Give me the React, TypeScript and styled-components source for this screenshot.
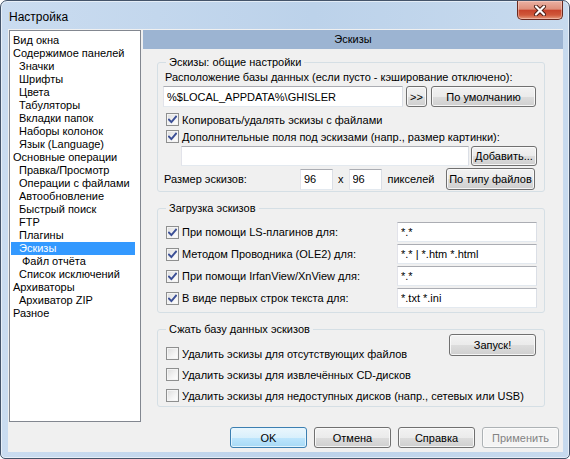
import styled, { createGlobalStyle } from 'styled-components';

const GlobalStyle = createGlobalStyle`
  html, body {
    margin: 0;
    padding: 0;
    background: #ffffff;
  }
  body {
    font-family: 'Liberation Sans', Arial, sans-serif;
    font-size: 11px;
    color: #000;
  }
  * {
    box-sizing: border-box;
  }
`;

const Window = styled.div`
  width: 570px;
  height: 459px;
  display: flex;
  flex-direction: column;
  padding: 0 6px 6px 7px;
  border: 1px solid #44546a;
  border-radius: 7px 7px 5px 5px;
  background: linear-gradient(90deg, #cadcf0 0%, #bcd2ea 55%, #c7daee 100%);
  box-shadow: inset 0 0 0 1px rgba(255, 255, 255, 0.55);
`;

const TitleBar = styled.div`
  height: 28px;
  flex: none;
  display: flex;
  justify-content: space-between;
  align-items: flex-start;
`;

const TitleText = styled.div`
  margin-top: 9px;
  padding-left: 1px;
  font-size: 12px;
  line-height: 14px;
  color: #000;
`;

const CloseButton = styled.div`
  width: 46px;
  height: 19px;
  display: flex;
  align-items: center;
  justify-content: center;
  border: 1px solid #6a2a1f;
  border-top: none;
  border-radius: 0 0 5px 5px;
  background: linear-gradient(180deg, #eab1a3 0%, #de8f7b 45%, #c8442b 52%, #d0583a 78%, #e59a7c 100%);
  box-shadow: inset 0 0 0 1px rgba(255, 220, 210, 0.45);
`;

const Client = styled.div`
  flex: 1;
  display: flex;
  flex-direction: column;
  background: #f0f0f0;
  min-width: 0;
`;

const MainRow = styled.div`
  display: flex;
  height: 393px;
  padding: 1px 0 0 1px;
`;

const Tree = styled.div`
  width: 132px;
  height: 392px;
  flex: none;
  border: 1px solid #828790;
  background: #fff;
  padding-top: 3px;
`;

const TreeRow = styled.div<{ $level: number; $selected?: boolean }>`
  height: 13px;
  line-height: 13px;
  margin: 0 5px 0 1px;
  padding-left: ${(p) => (p.$level === 0 ? 2 : p.$level === 1 ? 8 : 11)}px;
  white-space: nowrap;
  color: ${(p) => (p.$selected ? '#fff' : '#000')};
  background: ${(p) => (p.$selected ? '#3399ff' : 'transparent')};
`;

const RightPanel = styled.div`
  flex: 1;
  min-width: 0;
  margin-left: 2px;
  display: flex;
  flex-direction: column;
`;

const PanelHeader = styled.div`
  height: 19px;
  line-height: 19px;
  text-align: center;
  background: #9cb4d2;
  color: #000;
`;

const GroupBox = styled.div<{ $top: number; $bottom: number }>`
  margin: ${(p) => p.$top}px 18px 0 14px;
  padding: 0 7px ${(p) => p.$bottom}px 5px;
  border: 1px solid #d5dfe5;
  border-radius: 3px;
`;

const GroupTitle = styled.div`
  width: fit-content;
  margin: -7px 0 0 3px;
  padding: 0 3px;
  line-height: 13px;
  background: #f0f0f0;
`;

const Caption = styled.div`
  margin: 2px 0 0 2px;
  line-height: 13px;
`;

const Row = styled.div<{ $height: number; $top: number; $indent?: number }>`
  display: flex;
  align-items: center;
  height: ${(p) => p.$height}px;
  margin-top: ${(p) => p.$top}px;
  padding-left: ${(p) => p.$indent ?? 0}px;
`;

const TextInput = styled.input<{ $width?: number; $height?: number }>`
  ${(p) => (p.$width ? `width: ${p.$width}px; flex: none;` : 'flex: 1 1 0; width: 0; min-width: 0;')}
  height: ${(p) => p.$height ?? 21}px;
  padding: 0 3px;
  margin: 0;
  border: 1px solid;
  border-color: #abadb3 #dbdfe6 #e3e9ef #e2e3ea;
  background: #fff;
  font: inherit;
  color: #000;
  outline: none;
`;

const Button = styled.div<{ $width: number; $height?: number; $kind?: 'default' | 'disabled' }>`
  width: ${(p) => p.$width}px;
  height: ${(p) => p.$height ?? 21}px;
  flex: none;
  display: flex;
  align-items: center;
  justify-content: center;
  border: 1px solid ${(p) => (p.$kind === 'default' ? '#3c7fb1' : p.$kind === 'disabled' ? '#adb2b5' : '#707070')};
  border-radius: 3px;
  color: ${(p) => (p.$kind === 'disabled' ? '#838383' : '#000')};
  background: ${(p) =>
    p.$kind === 'default'
      ? 'linear-gradient(180deg, #eaf6fd 0%, #d9f0fc 50%, #bee6fd 50%, #a7d9f5 100%)'
      : p.$kind === 'disabled'
      ? '#f4f4f4'
      : 'linear-gradient(180deg, #f2f2f2 0%, #ebebeb 50%, #dddddd 50%, #cfcfcf 100%)'};
  box-shadow: inset 0 0 0 1px ${(p) => (p.$kind === 'default' ? 'rgba(230,246,255,0.9)' : 'rgba(252,252,252,0.85)')};
  white-space: nowrap;
`;

const CheckLabel = styled.label<{ $height: number }>`
  display: flex;
  align-items: center;
  height: ${(p) => p.$height}px;
  padding-left: 3px;
  white-space: nowrap;
`;

const CheckBox = styled.span`
  width: 13px;
  height: 13px;
  flex: none;
  margin-right: 3px;
  border: 1px solid #8e8f8f;
  background: linear-gradient(135deg, #dcdcdc 0%, #f4f4f4 60%, #ffffff 100%);
  box-shadow: inset 0 0 0 1px #f4f4f4;
  display: flex;
  align-items: center;
  justify-content: center;
`;

const Spacer = styled.div`
  flex: 1;
`;

const Plain = styled.span<{ $left: number }>`
  margin-left: ${(p) => p.$left}px;
  flex: none;
`;

const SizeLabel = styled.span`
  width: 137px;
  flex: none;
  padding-left: 1px;
`;

const LoadList = styled.div`
  margin-top: 6px;
`;

const LoadLabel = styled.div`
  width: 234px;
  flex: none;
`;

const CompactGrid = styled.div`
  display: grid;
  grid-template-columns: 1fr auto;
  grid-template-rows: 30px 21px 21px;
  margin-top: -2px;
  padding-right: 1px;
`;

const GridCell = styled.div<{ $span?: boolean; $align: 'start' | 'end' }>`
  grid-column: ${(p) => (p.$span ? '1 / 3' : 'auto')};
  align-self: ${(p) => p.$align};
`;

const ButtonBar = styled.div`
  display: flex;
  justify-content: flex-end;
  gap: 7px;
  margin-top: 5px;
  padding-right: 4px;
`;

const treeItems: { text: string; level: number; selected?: boolean }[] = [
  { text: 'Вид окна', level: 0 },
  { text: 'Содержимое панелей', level: 0 },
  { text: 'Значки', level: 1 },
  { text: 'Шрифты', level: 1 },
  { text: 'Цвета', level: 1 },
  { text: 'Табуляторы', level: 1 },
  { text: 'Вкладки папок', level: 1 },
  { text: 'Наборы колонок', level: 1 },
  { text: 'Язык (Language)', level: 1 },
  { text: 'Основные операции', level: 0 },
  { text: 'Правка/Просмотр', level: 1 },
  { text: 'Операции с файлами', level: 1 },
  { text: 'Автообновление', level: 1 },
  { text: 'Быстрый поиск', level: 1 },
  { text: 'FTP', level: 1 },
  { text: 'Плагины', level: 1 },
  { text: 'Эскизы', level: 1, selected: true },
  { text: 'Файл отчёта', level: 2 },
  { text: 'Список исключений', level: 1 },
  { text: 'Архиваторы', level: 0 },
  { text: 'Архиватор ZIP', level: 1 },
  { text: 'Разное', level: 0 },
];

const loaders = [
  { text: 'При помощи LS-плагинов для:', value: '*.*' },
  { text: 'Методом Проводника (OLE2) для:', value: '*.* | *.htm *.html' },
  { text: 'При помощи IrfanView/XnView для:', value: '*.*' },
  { text: 'В виде первых строк текста для:', value: '*.txt *.ini' },
];

const Check = ({ checked, children, height = 17 }: { checked?: boolean; children: string; height?: number }) => (
  <CheckLabel $height={height}>
    <CheckBox>
      {checked && (
        <svg width="9" height="9" viewBox="0 0 9 9">
          <path d="M1 4.6 L3.4 7 L8 1.6" fill="none" stroke="#3b4f96" strokeWidth="1.9" strokeLinecap="square" />
        </svg>
      )}
    </CheckBox>
    {children}
  </CheckLabel>
);

const App = () => (
  <>
    <GlobalStyle />
    <Window>
      <TitleBar>
        <TitleText>Настройка</TitleText>
        <CloseButton>
          <svg width="14" height="11" viewBox="0 0 14 11">
            <path d="M3 1.5 L11 9.5 M11 1.5 L3 9.5" stroke="#4a1d14" strokeWidth="4" strokeLinecap="round" />
            <path d="M3 1.5 L11 9.5 M11 1.5 L3 9.5" stroke="#ffffff" strokeWidth="2.2" strokeLinecap="round" />
          </svg>
        </CloseButton>
      </TitleBar>
      <Client>
        <MainRow>
          <Tree>
            {treeItems.map((item) => (
              <TreeRow key={item.text} $level={item.level} $selected={item.selected}>
                {item.text}
              </TreeRow>
            ))}
          </Tree>
          <RightPanel>
            <PanelHeader>Эскизы</PanelHeader>

            <GroupBox $top={13} $bottom={1}>
              <GroupTitle>Эскизы: общие настройки</GroupTitle>
              <Caption>Расположение базы данных (если пусто - кэширование отключено):</Caption>
              <Row $height={21} $top={2}>
                <TextInput $width={240} readOnly value="%$LOCAL_APPDATA%\GHISLER" />
                <Plain $left={3}>
                  <Button $width={21}>&gt;&gt;</Button>
                </Plain>
                <Plain $left={4}>
                  <Button $width={105}>По умолчанию</Button>
                </Plain>
              </Row>
              <Row $height={17} $top={4}>
                <Check checked>Копировать/удалять эскизы с файлами</Check>
              </Row>
              <Row $height={17} $top={0}>
                <Check checked>Дополнительные поля под эскизами (напр., размер картинки):</Check>
              </Row>
              <Row $height={20} $top={1} $indent={18}>
                <TextInput $height={20} readOnly value="" />
                <Plain $left={2}>
                  <Button $width={66} $height={20}>Добавить...</Button>
                </Plain>
              </Row>
              <Row $height={22} $top={2}>
                <SizeLabel>Размер эскизов:</SizeLabel>
                <TextInput $width={33} readOnly value="96" />
                <Plain $left={5}>x</Plain>
                <Plain $left={5}>
                  <TextInput $width={33} readOnly value="96" />
                </Plain>
                <Plain $left={6}>пикселей</Plain>
                <Spacer />
                <Button $width={89} $height={22}>По типу файлов</Button>
                <Plain $left={2} />
              </Row>
            </GroupBox>

            <GroupBox $top={16} $bottom={3}>
              <GroupTitle>Загрузка эскизов</GroupTitle>
              <LoadList>
                {loaders.map((l) => (
                  <Row key={l.text} $height={22} $top={0}>
                    <LoadLabel>
                      <Check checked>{l.text}</Check>
                    </LoadLabel>
                    <TextInput $height={20} readOnly value={l.value} />
                  </Row>
                ))}
              </LoadList>
            </GroupBox>

            <GroupBox $top={16} $bottom={0}>
              <GroupTitle>Сжать базу данных эскизов</GroupTitle>
              <CompactGrid>
                <GridCell $align="end">
                  <Check height={21}>Удалить эскизы для отсутствующих файлов</Check>
                </GridCell>
                <GridCell $align="start">
                  <Button $width={87} $height={22}>Запуск!</Button>
                </GridCell>
                <GridCell $span $align="end">
                  <Check height={21}>Удалить эскизы для извлечённых CD-дисков</Check>
                </GridCell>
                <GridCell $span $align="end">
                  <Check height={21}>Удалить эскизы для недоступных дисков (напр., сетевых или USB)</Check>
                </GridCell>
              </CompactGrid>
            </GroupBox>
          </RightPanel>
        </MainRow>
        <ButtonBar>
          <Button $width={77} $kind="default">OK</Button>
          <Button $width={77}>Отмена</Button>
          <Button $width={77}>Справка</Button>
          <Button $width={77} $kind="disabled">Применить</Button>
        </ButtonBar>
      </Client>
    </Window>
  </>
);

export default App;
